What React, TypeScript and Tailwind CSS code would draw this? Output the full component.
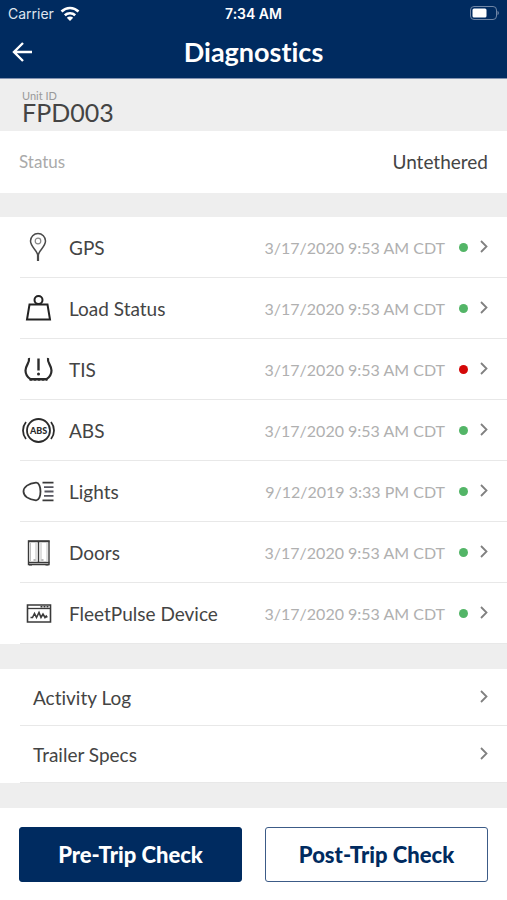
import type { ReactNode } from "react";

const iconClass = "h-8 w-9 shrink-0";

function GpsIcon() {
  return (
    <svg className={iconClass} viewBox="0 0 36 32" fill="none" stroke="#4a4a4a" aria-hidden="true">
      <path d="M18 25C18 20 10.500 16 10.500 10a7.500 7.500 0 0 1 15 0C25.500 16 18 20 18 25z" strokeWidth="1.500" />
      <path d="M18 22v8" strokeWidth="2.200" />
      <circle cx="18" cy="10" r="2.800" stroke="#888888" strokeWidth="1.200" />
    </svg>
  );
}

function LoadIcon() {
  return (
    <svg className={iconClass} viewBox="0 0 36 32" fill="none" stroke="#222222" strokeWidth="2" aria-hidden="true">
      <circle cx="18.500" cy="8" r="4" />
      <path d="M9.500 12.500h18l2.500 15H7z" strokeLinejoin="miter" />
    </svg>
  );
}

function TireIcon() {
  return (
    <svg className={iconClass} viewBox="0 0 36 32" fill="none" stroke="#2b2b2b" strokeWidth="2.200" aria-hidden="true">
      <path d="M9 5c1 5-3.500 7-3.500 12.500 0 4.500 2.500 7 5 8.700h16c2.500-1.700 5-4.200 5-8.700C31.500 12 27 10 28 5" />
      <path d="M9.500 26.800h18" strokeWidth="2" strokeDasharray="3 1" />
      <path d="M18.500 5.500v12" strokeWidth="2.400" />
      <circle cx="18.500" cy="21" r="1.500" fill="#2b2b2b" stroke="none" />
    </svg>
  );
}

function AbsIcon() {
  return (
    <svg className={iconClass} viewBox="0 0 36 32" fill="none" stroke="#2b2b2b" strokeWidth="1.800" aria-hidden="true">
      <circle cx="18.500" cy="16.500" r="11.500" />
      <path d="M6 8c-4 5-4 12 0 17M31 8c4 5 4 12 0 17" />
      <text x="18.500" y="19.500" textAnchor="middle" fill="#2b2b2b" stroke="none" fontSize="9" fontWeight="900" fontFamily="Lato, sans-serif">
        ABS
      </text>
    </svg>
  );
}

function LightsIcon() {
  return (
    <svg className={iconClass} viewBox="0 0 36 32" fill="none" stroke="#3a3a3a" strokeWidth="1.800" aria-hidden="true">
      <path d="M16 7.700c3-.2 4.500 4.300 4.500 8.800s-1.500 9-4.500 8.800C8.500 24.700 3.500 21 3.500 16.500s5-8.200 12.500-8.800z" />
      <path d="M22.500 7.700h11M22.500 25.300h11" />
      <path d="M24 12.100h9.500M24.500 16.500h9M24 20.900h9.500" stroke="#55555f" />
    </svg>
  );
}

function DoorsIcon() {
  return (
    <svg className={iconClass} viewBox="0 0 36 32" fill="none" stroke="#3a3a3a" aria-hidden="true">
      <path d="M8.500 5h20.500v23.500H8.500z" strokeWidth="1.400" />
      <path d="M8 5.500h21.500M8 26.500h21.500" strokeWidth="1.600" />
      <path d="M18.500 6v20" strokeWidth="1.400" />
      <path d="M16 7v18M21 7v18M10.500 7v18M27 7v18" stroke="#b0b0b0" strokeWidth=".8" />
      <path d="M13.500 24h2M21.500 24h2" stroke="#777777" />
      <path d="M9 29h3M25.500 29h3" strokeWidth="1.100" />
    </svg>
  );
}

function DeviceIcon() {
  return (
    <svg className={iconClass} viewBox="0 0 36 32" fill="none" stroke="#3a3a3a" aria-hidden="true">
      <path d="M7.500 8h23v17h-23z" strokeWidth="1.600" />
      <path d="M7.500 11.500h23" strokeWidth="1.300" />
      <path d="M20.500 9.700h2M23.500 9.700h2M26.500 9.700h2" strokeWidth="1.500" />
      <path d="M10.500 20.500h2l2-4 2 4 2.500-5 2 5 2-3.500 2 3.500 1.200-1.500 1 1.500" strokeWidth="1.600" />
    </svg>
  );
}

function Chevron() {
  return (
    <svg className="h-4 w-2 shrink-0" viewBox="0 0 8 16" fill="none" stroke="#808080" strokeWidth="1.800" aria-hidden="true">
      <path d="M1 2l5.500 5.500L1 13" />
    </svg>
  );
}

type Item = { label: string; date: string; ok: boolean; icon: ReactNode };

const items: Item[] = [
  { label: "GPS", date: "3/17/2020 9:53 AM CDT", ok: true, icon: <GpsIcon /> },
  { label: "Load Status", date: "3/17/2020 9:53 AM CDT", ok: true, icon: <LoadIcon /> },
  { label: "TIS", date: "3/17/2020 9:53 AM CDT", ok: false, icon: <TireIcon /> },
  { label: "ABS", date: "3/17/2020 9:53 AM CDT", ok: true, icon: <AbsIcon /> },
  { label: "Lights", date: "9/12/2019 3:33 PM CDT", ok: true, icon: <LightsIcon /> },
  { label: "Doors", date: "3/17/2020 9:53 AM CDT", ok: true, icon: <DoorsIcon /> },
  { label: "FleetPulse Device", date: "3/17/2020 9:53 AM CDT", ok: true, icon: <DeviceIcon /> },
];

const links = ["Activity Log", "Trailer Specs"];

export default function App() {
  return (
    <div className="min-h-screen bg-white font-[Lato,sans-serif] text-[#444444] [font-variant-ligatures:none]">
      <header className="border-b border-[#8292b0] bg-[#002b60] text-white">
        <div className="grid h-7 grid-cols-3 items-center px-2 font-[Inter,sans-serif] text-sm">
          <div className="flex items-center gap-1.5 text-[#dfe5ee]">
            <span>Carrier</span>
            <svg className="h-4 w-5" viewBox="0 0 20 16" fill="none" stroke="#ffffff" strokeWidth="2.600" aria-label="Wi-Fi">
              <path d="M1.500 5.500c5-4.600 12-4.600 17 0M4.800 9.200c3-2.700 7.400-2.700 10.400 0" />
              <path d="M10 15l-3.200-3.300c1.900-1.600 4.500-1.600 6.400 0z" fill="#ffffff" stroke="none" />
            </svg>
          </div>
          <span className="text-center font-semibold">7:34 AM</span>
          <svg className="h-4 w-[30px] justify-self-end" viewBox="0 0 30 16" fill="none" aria-label="Battery">
            <rect x="1.500" y=".5" width="26" height="13" rx="3.500" stroke="#7086a6" />
            <rect x="3.500" y="2.500" width="14" height="9" rx="1.500" fill="#ffffff" />
            <path d="M28.500 4.800c1.800.8 1.800 3.600 0 4.400z" fill="#7086a6" />
          </svg>
        </div>
        <div className="grid h-[50px] grid-cols-[40px_1fr_40px] items-center px-2 pb-0.5">
          <button type="button" aria-label="Back" className="flex h-10 items-center pl-1">
            <svg className="h-6 w-6" viewBox="0 0 24 24" fill="none" stroke="#ffffff" strokeWidth="2.400" aria-hidden="true">
              <path d="M20 12H2M11 3l-9 9 9 9" />
            </svg>
          </button>
          <h1 className="text-center text-[27px] leading-8 font-bold">Diagnostics</h1>
        </div>
      </header>

      <main>
        <section className="h-[52px] bg-[#eeeeee] px-[22px] pt-[11px]">
          <p className="text-[11px] leading-3 text-[#999999]">Unit ID</p>
          <p className="text-[25px] leading-5">FPD003</p>
        </section>
        <section className="flex h-[62px] items-center justify-between px-[19px]">
          <span className="text-[17px] text-[#aaaaaa]">Status</span>
          <span className="text-[19px]">Untethered</span>
        </section>

        <ul className="border-t-24 border-[#eeeeee]">
          {items.map((item) => (
            <li key={item.label} className="pl-5">
              <a href="#" className="flex h-[61px] items-center border-b border-[#e8e8e8] pr-[19px]">
                {item.icon}
                <span className="ml-[13px] flex-1 pt-0.5 text-[19px]">{item.label}</span>
                <span className="pt-0.5 text-base text-[#b0b0b0]">{item.date}</span>
                <span className={`mr-3 ml-[14px] size-[9px] rounded-full ${item.ok ? "bg-[#53b567]" : "bg-[#d40808]"}`} />
                <Chevron />
              </a>
            </li>
          ))}
        </ul>

        <ul className="border-y-25 border-[#eeeeee]">
          {links.map((label) => (
            <li key={label} className="pl-5">
              <a href="#" className="flex h-[57px] items-center justify-between border-b border-[#e8e8e8] pr-[19px] pl-[13px]">
                <span className="pt-0.5 text-[19px]">{label}</span>
                <Chevron />
              </a>
            </li>
          ))}
        </ul>

        <div className="flex gap-[23px] px-[19px] pt-[19px] pb-[18px] text-[22px] font-black">
          <button type="button" className="h-[55px] flex-1 rounded-[3px] border border-[#002b60] bg-[#002b60] text-white">
            Pre-Trip Check
          </button>
          <button type="button" className="h-[55px] flex-1 rounded-[3px] border border-[#3c5b87] bg-white text-[#002b60]">
            Post-Trip Check
          </button>
        </div>
      </main>
    </div>
  );
}
